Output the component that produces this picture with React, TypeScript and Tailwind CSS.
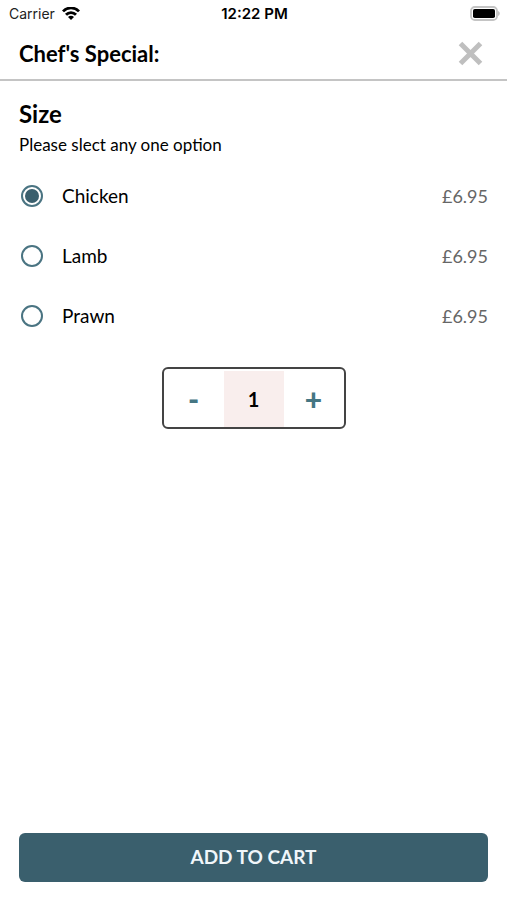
import { useState } from 'react';

interface Option {
  id: string;
  name: string;
  price: number;
}

const options: Option[] = [
  { id: 'chicken', name: 'Chicken', price: 6.95 },
  { id: 'lamb', name: 'Lamb', price: 6.95 },
  { id: 'prawn', name: 'Prawn', price: 6.95 },
];

function StatusBar() {
  return (
    <div className="grid grid-cols-3 items-center h-7 pl-[9px] pr-[7px] font-[Inter,sans-serif] text-sm text-[#222]">
      <div className="flex items-center gap-[7px]">
        <span>Carrier</span>
        <svg width="18" height="14" viewBox="0 0 18 14" fill="none" stroke="#000" strokeWidth="2.8" aria-hidden="true">
          <path d="M1 4.4C5.4 -0.2 12.6 -0.2 17 4.4" />
          <path d="M4 7.8c2.8-3 7.2-3 10 0" />
          <path d="M9 13 6 10c1.7-1.7 4.3-1.7 6 0Z" fill="#000" stroke="none" />
        </svg>
      </div>
      <span className="text-center text-[15px] font-semibold text-black whitespace-nowrap">12:22 PM</span>
      <svg className="justify-self-end" width="30" height="16" viewBox="0 0 30 16" aria-hidden="true">
        <rect x="1" y="1" width="26" height="13" rx="3.8" fill="#fff" stroke="#c4c4c4" strokeWidth="1.8" />
        <rect x="3" y="3" width="22" height="9" rx="1.8" fill="#000" />
        <path d="M28 5c2.4 1 2.4 4 0 5Z" fill="#c4c4c4" />
      </svg>
    </div>
  );
}

export default function App() {
  const [selected, setSelected] = useState('chicken');
  const [quantity, setQuantity] = useState(1);

  return (
    <div className="min-h-screen flex flex-col bg-white text-black font-[Lato,sans-serif]">
      <StatusBar />

      <header className="flex items-center justify-between h-[53px] pl-[19px] pr-6 border-b-2 border-[#c4c4c4]">
        <h1 className="text-[22px] leading-7 font-bold">Chef's Special:</h1>
        <button type="button" aria-label="Close">
          <svg width="25" height="25" viewBox="0 0 25 25" fill="none" stroke="#bfbfbf" strokeWidth="5" aria-hidden="true">
            <path d="M2.5 2.5l20 20M22.5 2.5l-20 20" />
          </svg>
        </button>
      </header>

      <main className="flex-1 px-[19px] pt-[17px]">
        <h2 className="text-2xl font-bold">Size</h2>
        <p className="mt-[3px] text-[17px] leading-6">Please slect any one option</p>

        <div role="radiogroup" aria-label="Size" className="mt-[9px]">
          {options.map((option) => (
            <label key={option.id} className="flex items-center h-[60px] text-[19px] cursor-pointer">
              <input
                type="radio"
                name="size"
                value={option.id}
                checked={selected === option.id}
                onChange={() => setSelected(option.id)}
                className="appearance-none shrink-0 w-[22px] h-[22px] ml-0.5 mr-[19px] p-0.5 rounded-full border-2 border-[#4a7482] bg-clip-content checked:bg-[#3a5f6d]"
              />
              <span className="flex-1">{option.name}</span>
              <span className="text-lg text-[#666]">£{option.price.toFixed(2)}</span>
            </label>
          ))}
        </div>

        <div className="flex w-[184px] h-[62px] mx-auto mt-[21px] pt-0.5 border-2 border-[#444] rounded-md text-xl font-bold">
          <button
            type="button"
            aria-label="Decrease quantity"
            onClick={() => setQuantity(Math.max(1, quantity - 1))}
            className="flex-1 text-3xl font-black text-[#457683]"
          >
            -
          </button>
          <output className="flex flex-1 items-center justify-center bg-[#f9eeed]">{quantity}</output>
          <button
            type="button"
            aria-label="Increase quantity"
            onClick={() => setQuantity(quantity + 1)}
            className="flex-1 text-3xl font-black text-[#457683]"
          >
            +
          </button>
        </div>
      </main>

      <footer className="px-[19px] pb-[18px]">
        <button type="button" className="w-full h-[49px] rounded-md bg-[#3a5f6d] text-[19px] font-bold text-[#f0f6fa]">
          ADD TO CART
        </button>
      </footer>
    </div>
  );
}
